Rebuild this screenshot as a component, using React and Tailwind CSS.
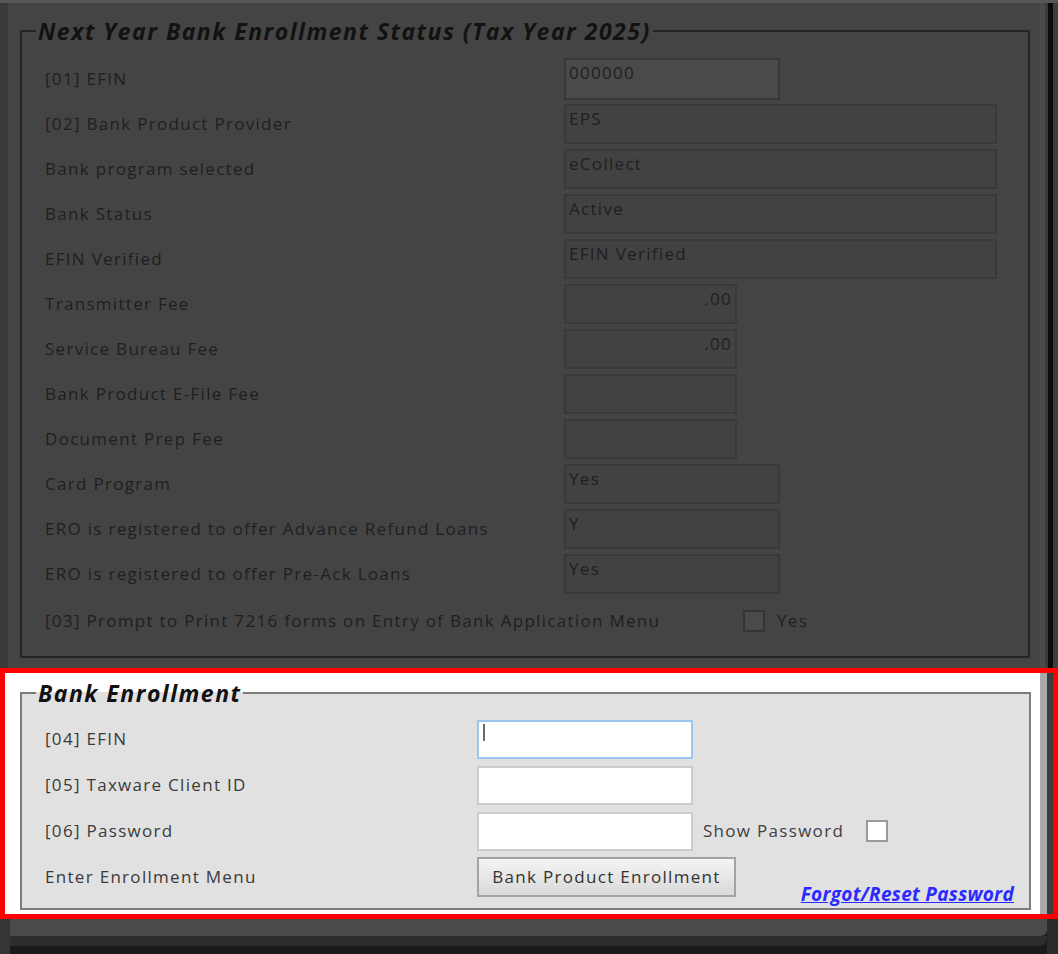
import React from "react";

const topRows = [
  { label: "[01] EFIN", value: "000000", box: "w-[216px] h-[42px] bg-[#4a4a4a]" },
  { label: "[02] Bank Product Provider", value: "EPS", box: "w-[433px] h-[40px] bg-[#424242]" },
  { label: "Bank program selected", value: "eCollect", box: "w-[433px] h-[40px] bg-[#424242]" },
  { label: "Bank Status", value: "Active", box: "w-[433px] h-[40px] bg-[#424242]" },
  { label: "EFIN Verified", value: "EFIN Verified", box: "w-[433px] h-[40px] bg-[#424242]" },
  { label: "Transmitter Fee", value: ".00", box: "w-[173px] h-[40px] bg-[#424242] text-right" },
  { label: "Service Bureau Fee", value: ".00", box: "w-[173px] h-[40px] bg-[#424242] text-right" },
  { label: "Bank Product E-File Fee", value: "", box: "w-[173px] h-[40px] bg-[#424242]" },
  { label: "Document Prep Fee", value: "", box: "w-[173px] h-[40px] bg-[#424242]" },
  { label: "Card Program", value: "Yes", box: "w-[216px] h-[40px] bg-[#424242]" },
  { label: "ERO is registered to offer Advance Refund Loans", value: "Y", box: "w-[216px] h-[40px] bg-[#424242]" },
  { label: "ERO is registered to offer Pre-Ack Loans", value: "Yes", box: "w-[216px] h-[40px] bg-[#424242]" },
];

function DimRow({ label, value, box }) {
  return (
    <div className="flex h-[45px] items-center">
      <div className="w-[519px] shrink-0">{label}</div>
      <div className={`border-2 border-[#393939] px-[3px] pt-[1px] leading-[24px] ${box}`}>{value}</div>
    </div>
  );
}

function LightInput({ focused }) {
  return (
    <div
      className={`flex h-[39px] w-[216px] items-start bg-white border-2 ${
        focused ? "border-[#9dc6ec]" : "border-[#cccccc]"
      }`}
    >
      {focused && <span className="ml-[4px] mt-[2px] h-[17px] w-[2px] bg-[#6a6a6a]" />}
    </div>
  );
}

export default function App() {
  return (
    <div className="flex h-[954px] w-[1058px] flex-col overflow-hidden bg-[#444444] font-['Open_Sans','Noto_Sans',sans-serif] text-[17px] tracking-[1.3px]">
      {/* dimmed status panel */}
      <div className="flex h-[668px] shrink-0 border-t-[3px] border-[#575757]">
        <div className="w-[8px] bg-[#3a3a3a]" />
        <div className="w-[12px]" />
        <fieldset className="mt-[13px] mb-[10px] w-[1010px] shrink-0 rounded-[2px] border-2 border-[#242424] text-[#1f1f1f]">
          <legend className="ml-[14px] px-[2px] text-[23px] font-bold italic leading-[30px] tracking-[1.5px] text-[#121212]">
            Next Year Bank Enrollment Status (Tax Year 2025)
          </legend>
          <div className="px-[23px] pt-[10px] pb-[6px]">
            {topRows.map((r) => (
              <DimRow key={r.label} {...r} />
            ))}
            <div className="mt-[2px] flex h-[45px] items-center">
              <div className="w-[698px] shrink-0">
                [03] Prompt to Print 7216 forms on Entry of Bank Application Menu
              </div>
              <div className="h-[22px] w-[22px] border-2 border-[#343434] bg-[#4a4a4a]" />
              <span className="ml-[12px]">Yes</span>
            </div>
          </div>
        </fieldset>
        <div className="w-[10px]" />
        <div className="w-[5px] bg-[#4a4a4a]" />
        <div className="w-[3px] bg-[#3a3a3a]" />
        <div className="w-[5px] bg-[#0c0c0c]" />
        <div className="flex-1 bg-[#3e3e3e]" />
      </div>

      {/* highlighted enrollment panel */}
      <div className="flex h-[251px] shrink-0 border-[5px] border-[#ff0000] bg-white">
        <div className="w-[15px]" />
        <fieldset className="mt-[5px] mb-[4px] w-[1011px] shrink-0 border-2 border-[#7c7c7c] bg-[#e1e1e1] text-[#3a3a3a]">
          <legend className="ml-[14px] px-[2px] text-[23px] font-bold italic leading-[30px] tracking-[1.5px] text-[#111111]">
            Bank Enrollment
          </legend>
          <div className="pl-[23px] pr-[15px] pt-[8px] pb-[6px]">
            <div className="flex h-[46px] items-center">
              <div className="w-[432px] shrink-0">[04] EFIN</div>
              <LightInput focused />
            </div>
            <div className="flex h-[46px] items-center">
              <div className="w-[432px] shrink-0">[05] Taxware Client ID</div>
              <LightInput />
            </div>
            <div className="flex h-[46px] items-center">
              <div className="w-[432px] shrink-0">[06] Password</div>
              <LightInput />
              <span className="ml-[10px] text-[#404040]">Show Password</span>
              <div className="ml-[22px] h-[22px] w-[22px] border-2 border-[#9a9a9a] bg-white" />
            </div>
            <div className="flex h-[46px] items-center">
              <div className="w-[432px] shrink-0">Enter Enrollment Menu</div>
              <button
                type="button"
                className="h-[40px] w-[259px] border-2 border-[#a3a3a3] bg-gradient-to-b from-[#f4f4f4] to-[#d9d9d9] text-[#333333]"
              >
                Bank Product Enrollment
              </button>
              <a
                href="#"
                className="ml-auto -mb-[6px] self-end text-[19px] font-bold italic leading-[24px] tracking-[0.3px] text-[#2a2aff] underline"
              >
                Forgot/Reset Password
              </a>
            </div>
          </div>
        </fieldset>
        <div className="w-[9px]" />
        <div className="w-[7px] bg-[#a9a9a9]" />
        <div className="w-[6px] bg-[#3c3c3c]" />
      </div>

      {/* window bottom edge */}
      <div className="flex flex-1 bg-[#1a1a1a]">
        <div className="w-[10px] bg-[#353535]" />
        <div className="flex w-[1037px] flex-col">
          <div className="h-[17px] rounded-br-[6px] bg-[#4a4a4a]" />
          <div className="h-[10px] rounded-br-[8px] bg-[#2e2e2e]" />
        </div>
        <div className="flex-1 bg-[#2a2a2a]" />
      </div>
    </div>
  );
}
